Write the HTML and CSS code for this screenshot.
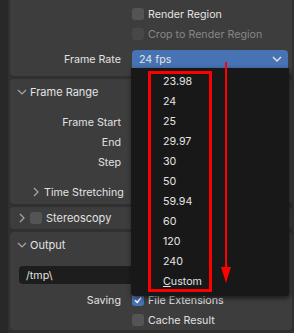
FILE: index.html
```html
<!DOCTYPE html>
<html lang="en">
<head>
<meta charset="UTF-8" />
<title>Output Properties</title>
<link rel="stylesheet" href="styles.css">
</head>
<body>
  <div class="editor">
    <div class="panel panel-top">
      <div class="row">
        <span class="label"></span>
        <div class="check"><span class="box"></span>Render Region</div>
      </div>
      <div class="row">
        <span class="label"></span>
        <div class="check dim"><span class="box"></span>Crop to Render Region</div>
      </div>
      <div class="row row-rate">
        <span class="label">Frame Rate</span>
        <div class="select">
          <span>24 fps</span>
          <svg width="10" height="6" viewBox="0 0 10 6"><path d="M1 1 L5 5 L9 1" fill="none" stroke="#e6e6e6" stroke-width="1.4"/></svg>
        </div>
      </div>
    </div>

    <div class="panel">
      <div class="panel-head">
        <svg class="chev" width="10" height="10" viewBox="0 0 10 10"><path d="M1 3 L5 7 L9 3" fill="none" stroke="#a8a8a8" stroke-width="1.2"/></svg>
        Frame Range
      </div>
      <div class="panel-body">
        <div class="row"><span class="label">Frame Start</span><div class="field"></div></div>
        <div class="row"><span class="label">End</span><div class="field"></div></div>
        <div class="row"><span class="label">Step</span><div class="field"></div></div>
        <div class="sub-head">
          <svg class="chev" width="10" height="10" viewBox="0 0 10 10"><path d="M3 1 L7 5 L3 9" fill="none" stroke="#a8a8a8" stroke-width="1.2"/></svg>
          Time Stretching
        </div>
      </div>
    </div>

    <div class="panel">
      <div class="panel-head head-short">
        <svg class="chev" width="10" height="10" viewBox="0 0 10 10"><path d="M3 1 L7 5 L3 9" fill="none" stroke="#a8a8a8" stroke-width="1.2"/></svg>
        <span class="box"></span>
        Stereoscopy
      </div>
    </div>

    <div class="panel panel-output">
      <div class="panel-head">
        <svg class="chev" width="10" height="10" viewBox="0 0 10 10"><path d="M1 3 L5 7 L9 3" fill="none" stroke="#a8a8a8" stroke-width="1.2"/></svg>
        Output
      </div>
      <div class="path">/tmp\</div>
      <div class="row">
        <span class="label">Saving</span>
        <div class="check"><span class="box on"><svg width="10" height="10" viewBox="0 0 10 10"><path d="M2 5.2 L4.2 7.4 L8.2 2.4" fill="none" stroke="#fff" stroke-width="1.6"/></svg></span>File Extensions</div>
      </div>
      <div class="row">
        <span class="label"></span>
        <div class="check"><span class="box"></span>Cache Result</div>
      </div>
    </div>

    <div class="menu">
      <div class="item">23.98</div>
      <div class="item">24</div>
      <div class="item">25</div>
      <div class="item">29.97</div>
      <div class="item">30</div>
      <div class="item">50</div>
      <div class="item">59.94</div>
      <div class="item">60</div>
      <div class="item">120</div>
      <div class="item">240</div>
      <div class="item"><u>C</u>ustom</div>
    </div>

    <svg class="marks" width="294" height="333" viewBox="0 0 294 333">
      <rect x="149.5" y="72.5" width="61" height="218" fill="none" stroke="#ff0000" stroke-width="3"/>
      <line x1="226" y1="62" x2="226" y2="270" stroke="#ff0000" stroke-width="2"/>
      <polygon points="221,267 231,267 226,283" fill="#ff0000"/>
    </svg>
  </div>
</body>
</html>
```

FILE: styles.css
```css
body {
  margin: 0;
  background: #282828;
  font-family: Inter, "DejaVu Sans", sans-serif;
  font-size: 10.7px;
  color: #e2e2e2;
  overflow: hidden;
}
.editor {
  position: relative;
  height: 333px;
  margin-left: 8px;
  padding: 0 2px 0 2px;
  background: #303030;
  display: flex;
  flex-direction: column;
  gap: 3px;
}
.panel {
  background: #3d3d3d;
  border-radius: 4px;
  width: 282px;
}
.panel-top {
  margin-top: -6px;
  padding: 10px 0 7px;
}
.row {
  display: flex;
  align-items: center;
  height: 20px;
}
.row-rate {
  margin-top: 5px;
}
.label {
  width: 111px;
  flex: none;
  text-align: right;
  padding-right: 11px;
}
.check {
  display: flex;
  align-items: center;
  gap: 4px;
}
.check.dim {
  color: #868686;
}
.box {
  width: 12px;
  height: 12px;
  border-radius: 3px;
  background: #545454;
  flex: none;
  display: flex;
  align-items: center;
  justify-content: center;
}
.dim .box {
  background: #474747;
}
.box.on {
  background: #4772b3;
}
.select {
  width: 143px;
  height: 18px;
  background: #4772b3;
  border-radius: 4px 4px 0 0;
  display: flex;
  align-items: center;
  justify-content: space-between;
  padding: 0 6px 0 7px;
}
.panel-head {
  height: 26px;
  display: flex;
  align-items: center;
  padding-left: 7px;
  gap: 3px;
  font-size: 11px;
}
.head-short {
  height: 22px;
}
.head-short .box {
  margin-right: 1px;
}
.panel-body {
  padding: 7px 0 2px;
}
.field {
  width: 150px;
  height: 18px;
  background: #545454;
  border-radius: 4px;
}
.sub-head {
  height: 20px;
  margin-top: 10px;
  display: flex;
  align-items: center;
  padding-left: 21px;
  gap: 3px;
}
.path {
  margin: 8px 0 6px 9px;
  height: 18px;
  width: 262px;
  background: #1d1d1d;
  border-radius: 4px;
  display: flex;
  align-items: center;
  padding-left: 7px;
  box-sizing: border-box;
}
.menu {
  position: absolute;
  left: 123px;
  top: 68px;
  width: 158px;
  height: 228px;
  box-sizing: border-box;
  padding: 4px 0 4px 32px;
  background: #181818;
  box-shadow: 1px 2px 5px rgba(0, 0, 0, 0.6);
  border-radius: 0 0 4px 4px;
}
.item {
  height: 20px;
  line-height: 20px;
}
.marks {
  position: absolute;
  left: -8px;
  top: 0;
}
```
